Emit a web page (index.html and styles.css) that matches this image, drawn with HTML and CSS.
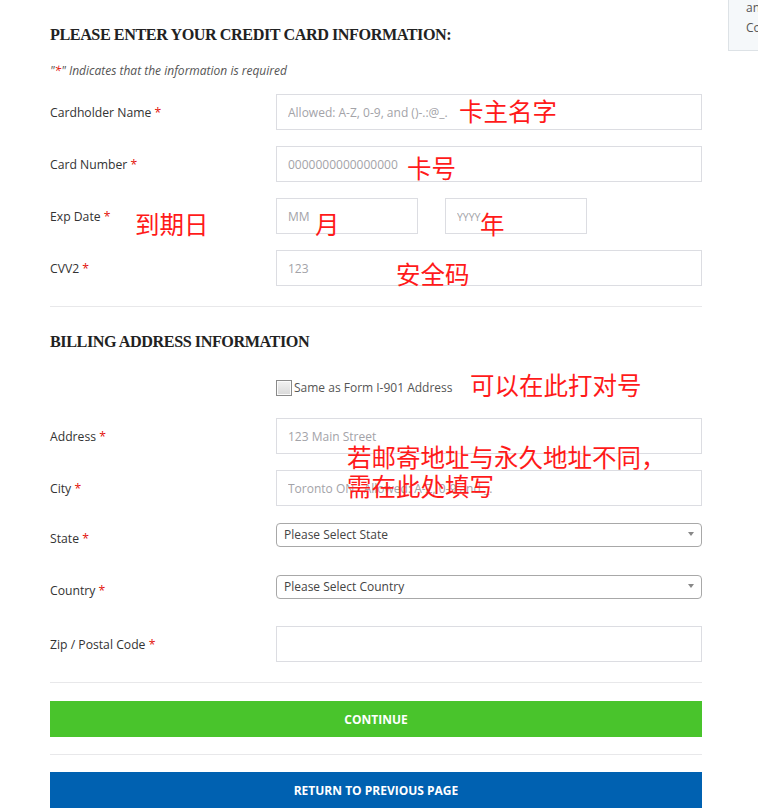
FILE: index.html
```html
<!DOCTYPE html>
<html lang="en">
<head>
<meta charset="UTF-8">
<meta name="viewport" content="width=device-width, initial-scale=1.0">
<title>Payment Information</title>
<link rel="stylesheet" href="styles.css">
</head>
<body>
<div class="page">
  <main class="checkout">
    <h2 class="section-title">PLEASE ENTER YOUR CREDIT CARD INFORMATION:</h2>
    <p class="required-note">"<span class="req">*</span>" Indicates that the information is required</p>

    <div class="field-row">
      <label for="cardName">Cardholder Name <span class="req">*</span></label>
      <input type="text" id="cardName" placeholder="Allowed: A-Z, 0-9, and ()-.:@_.">
    </div>
    <div class="field-row">
      <label for="cardNumber">Card Number <span class="req">*</span></label>
      <input type="text" id="cardNumber" placeholder="0000000000000000">
    </div>
    <div class="field-row">
      <label for="expMonth">Exp Date <span class="req">*</span></label>
      <div class="exp-inputs">
        <input type="text" id="expMonth" placeholder="MM">
        <input type="text" id="expYear" class="year" placeholder="YYYY">
      </div>
    </div>
    <div class="field-row">
      <label for="cvv">CVV2 <span class="req">*</span></label>
      <input type="text" id="cvv" placeholder="123">
    </div>

    <hr class="divider">

    <h2 class="section-title billing">BILLING ADDRESS INFORMATION</h2>

    <div class="check-row">
      <label class="check-label"><input type="checkbox" id="sameAddress"> Same as Form I-901 Address</label>
    </div>

    <div class="field-row">
      <label for="address">Address <span class="req">*</span></label>
      <input type="text" id="address" placeholder="123 Main Street">
    </div>
    <div class="field-row">
      <label for="city">City <span class="req">*</span></label>
      <input type="text" id="city" placeholder="Toronto ON   Allowed: A-Z, 0-9 and _.">
    </div>
    <div class="field-row select-row">
      <label for="state">State <span class="req">*</span></label>
      <div class="select-box">
        <select id="state"><option>Please Select State</option></select>
      </div>
    </div>
    <div class="field-row select-row">
      <label for="country">Country <span class="req">*</span></label>
      <div class="select-box">
        <select id="country"><option>Please Select Country</option></select>
      </div>
    </div>
    <div class="field-row">
      <label for="zip">Zip / Postal Code <span class="req">*</span></label>
      <input type="text" id="zip">
    </div>

    <hr class="divider">
    <button type="button" class="btn btn-continue">CONTINUE</button>
    <hr class="divider">
    <button type="button" class="btn btn-return">RETURN TO PREVIOUS PAGE</button>
  </main>

  <aside class="sidebar">
    <p>and</p>
    <p>Contact</p>
  </aside>

  <!-- red notes written over the screenshot -->
  <span class="note" style="left:459px; top:96px;">卡主名字</span>
  <span class="note" style="left:407px; top:153px;">卡号</span>
  <span class="note" style="left:135px; top:209px;">到期日</span>
  <span class="note" style="left:315px; top:209px;">月</span>
  <span class="note" style="left:480px; top:209px;">年</span>
  <span class="note" style="left:396px; top:259px;">安全码</span>
  <span class="note" style="left:470px; top:370px;">可以在此打对号</span>
  <span class="note" style="left:347px; top:442px;">若邮寄地址与永久地址不同，<br>需在此处填写</span>
</div>
</body>
</html>
```

FILE: styles.css
```css
body {
  margin: 0;
  background: #fff;
  font-family: 'Open Sans', 'Liberation Sans', sans-serif;
  color: #333;
  overflow: hidden;
}

.page {
  position: relative;
  display: flex;
  align-items: flex-start;
  width: 758px;
  height: 809px;
  overflow: hidden;
}

.checkout {
  flex-shrink: 0;
  width: 652px;
  padding: 24px 0 0 50px;
  display: flex;
  flex-direction: column;
}

.section-title {
  margin: 0;
  font-family: 'Liberation Serif', 'DejaVu Serif', serif;
  font-size: 16.2px;
  font-weight: bold;
  line-height: 22px;
  letter-spacing: -0.45px;
  color: #222;
}
.section-title.billing {
  margin-top: 24px;
}

.required-note {
  margin: 17px 0 15px;
  font-size: 12px;
  font-style: italic;
  color: #555;
  line-height: 16px;
}
.req {
  color: #e3120b;
}

.field-row {
  display: grid;
  grid-template-columns: 226px 426px;
  align-items: center;
  margin-bottom: 16px;
}
.field-row label {
  font-size: 12.2px;
  color: #333;
}
.field-row input[type=text] {
  box-sizing: border-box;
  width: 100%;
  height: 36px;
  padding: 0 11px;
  border: 1px solid #dcdde2;
  font-family: 'Open Sans', sans-serif;
  font-size: 12px;
  color: #333;
  outline: none;
}
.field-row input::placeholder {
  color: #a3a3a8;
}

.exp-inputs {
  display: flex;
  gap: 27px;
}
.exp-inputs input[type=text] {
  width: 142px;
  flex-shrink: 0;
}
.exp-inputs input.year::placeholder {
  font-size: 10.5px;
}

.divider {
  margin: 5px 0 0;
  border: none;
  border-top: 1px solid #e8e8ea;
  width: 100%;
}

.check-row {
  padding-left: 226px;
  margin: 26px 0 22px;
}
.check-label {
  display: flex;
  align-items: center;
  font-size: 12px;
  color: #555;
}
.check-label input {
  appearance: none;
  margin: 0 2px 0 0;
  width: 16px;
  height: 16px;
  border: 1px solid #8a8a8a;
  background: linear-gradient(#f2f2f2, #d9d9d9);
  box-shadow: inset 0 0 0 1px #fbfbfb;
}

.select-row {
  align-items: start;
  height: 36px;
}
.select-row label {
  margin-top: 8px;
}
.select-box {
  position: relative;
  height: 24px;
}
.select-box select {
  appearance: none;
  width: 100%;
  height: 24px;
  padding: 0 8px 0 7px;
  border: 1px solid #a8a8a8;
  border-radius: 4px;
  background: #fff;
  font-family: 'Open Sans', sans-serif;
  font-size: 12px;
  color: #444;
}
.select-box::after {
  content: '';
  position: absolute;
  right: 8px;
  top: 10px;
  border-left: 3px solid transparent;
  border-right: 3px solid transparent;
  border-top: 4px solid #888;
}

.btn {
  display: block;
  width: 100%;
  height: 36px;
  border: none;
  color: #fff;
  font-family: 'Open Sans', sans-serif;
  font-size: 12px;
  font-weight: bold;
  cursor: pointer;
}
.btn-continue {
  margin: 18px 0 12px;
  background-color: #49c42c;
}
.btn-return {
  margin-top: 17px;
  background-color: #0061b1;
}

.checkout .field-row + .divider {
  margin-top: 4px;
}

.sidebar {
  flex-shrink: 0;
  width: 200px;
  margin: -3px 0 0 26px;
  padding: 0 0 12px 17px;
  background: #f5f8fa;
  border: 1px solid #dde2e6;
  font-size: 12px;
  color: #555;
}
.sidebar p {
  margin: 0;
  line-height: 20px;
}

.note {
  position: absolute;
  font-family: 'Noto Sans CJK SC', sans-serif;
  font-size: 24.5px;
  line-height: 29px;
  color: #ff1a1a;
  white-space: nowrap;
}
```
